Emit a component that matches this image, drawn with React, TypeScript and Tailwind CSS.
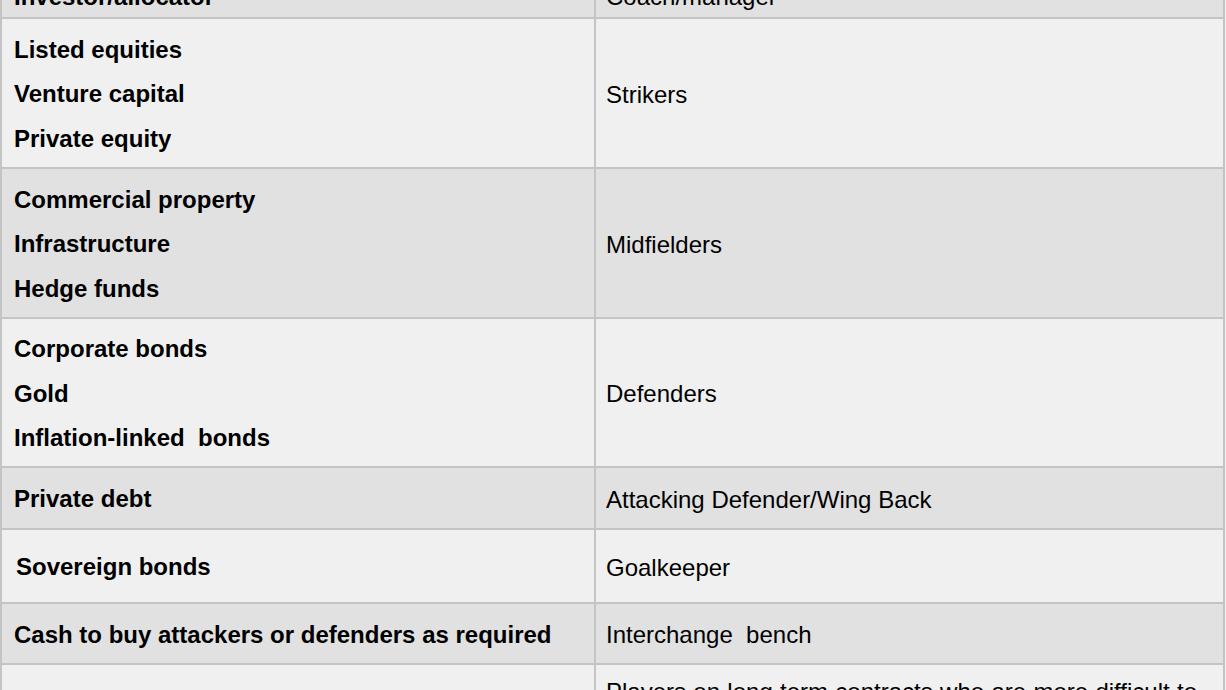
// App.tsx – asset class vs football position table
type Row = {
  left: string[];
  right: string;
  dark: boolean;
  height: string;
  indent?: boolean;
};

const rows: Row[] = [
  { left: ['Listed equities', 'Venture capital', 'Private equity'], right: 'Strikers', dark: false, height: 'h-[150px]' },
  { left: ['Commercial property', 'Infrastructure', 'Hedge funds'], right: 'Midfielders', dark: true, height: 'h-[150px]' },
  { left: ['Corporate bonds', 'Gold', 'Inflation-linked  bonds'], right: 'Defenders', dark: false, height: 'h-[149px]' },
  { left: ['Private debt'], right: 'Attacking Defender/Wing Back', dark: true, height: 'h-[62px]' },
  { left: ['Sovereign bonds'], right: 'Goalkeeper', dark: false, height: 'h-[74px]', indent: true },
  { left: ['Cash to buy attackers or defenders as required'], right: 'Interchange  bench', dark: true, height: 'h-[61px]' },
];

export default function App() {
  return (
    <div className="w-[1226px] h-[690px] overflow-hidden bg-[#f0f0f0] text-[24px] text-black font-['Liberation_Sans',Arial,sans-serif]">
      <div className="w-[1225px] -mt-[24px] border-x-2 border-[#c4c4c4]">
        {/* header row, mostly scrolled off the top */}
        <div className="flex h-[43px] bg-[#e1e1e1] border-b-2 border-[#c4c4c4]">
          <div className="w-[594px] shrink-0 border-r-2 border-[#c4c4c4] pl-[12px] flex items-center font-bold">
            Investor/allocator
          </div>
          <div className="flex-1 pl-[10px] flex items-center">Coach/manager</div>
        </div>

        {rows.map((row, i) => (
          <div
            key={i}
            className={`flex ${row.height} border-b-2 border-[#c4c4c4] ${row.dark ? 'bg-[#e1e1e1]' : 'bg-[#f0f0f0]'}`}
          >
            <div
              className={`w-[594px] shrink-0 border-r-2 border-[#c4c4c4] flex flex-col justify-center pt-[3px] font-bold leading-[44.5px] whitespace-pre ${row.indent ? 'pl-[14px]' : 'pl-[12px]'}`}
            >
              {row.left.map((line) => (
                <div key={line}>{line}</div>
              ))}
            </div>
            <div className="flex-1 pl-[10px] pt-[3px] flex items-center whitespace-pre">{row.right}</div>
          </div>
        ))}

        {/* last row, cut off at the bottom */}
        <div className="flex h-[120px] bg-[#f0f0f0]">
          <div className="w-[594px] shrink-0 border-r-2 border-[#c4c4c4]" />
          <div className="flex-1 pl-[10px] pr-[26px] pt-[12px] leading-[29px] text-justify">
            Players on long term contracts who are more difficult to sell
          </div>
        </div>
      </div>
    </div>
  );
}
